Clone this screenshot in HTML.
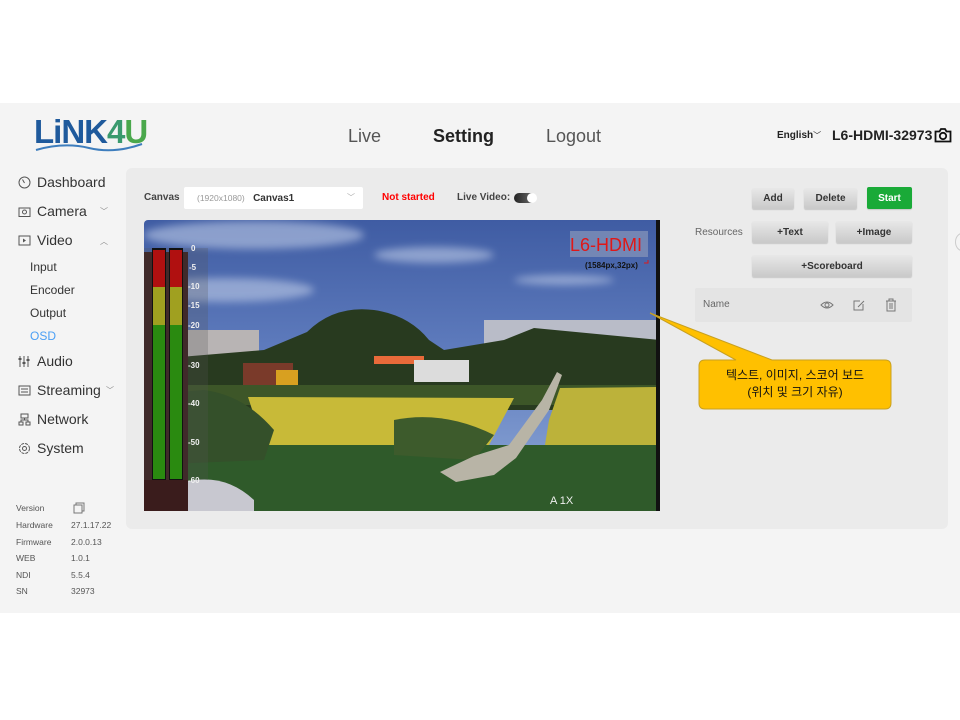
<!DOCTYPE html>
<html><head><meta charset="utf-8"><style>
*{margin:0;padding:0;box-sizing:border-box}
body{width:960px;height:720px;background:#fff;font-family:"Liberation Sans","Noto Sans CJK KR",sans-serif;position:relative;overflow:hidden;color:#333}
.abs{position:absolute}
#bg{left:0;top:103px;width:960px;height:510px;background:#f4f4f4}
.nav{font-size:18px;color:#555;top:126px}
.side{left:18px;font-size:14px;color:#333;display:flex;align-items:center}
.side svg{margin-right:6px}
.chev{position:absolute;font-size:8px;color:#888}
.sub{left:30px;font-size:12px;color:#333}
.ver{font-size:8.5px;color:#555}
#panel{left:126px;top:168px;width:822px;height:361px;background:#ebebeb;border-radius:6px}
.btn{background:linear-gradient(#e8e8e8,#c9c9c9);border-radius:2px;font-size:10px;font-weight:bold;color:#333;display:flex;align-items:center;justify-content:center;box-shadow:0 1px 1px rgba(0,0,0,.15)}
</style></head><body>
<div id="bg" class="abs"></div>
<!-- logo -->
<div class="abs" style="left:34px;top:112px;font-size:33px;font-weight:bold;letter-spacing:-1px;line-height:40px">
<span style="color:#1f5a9c">LiNK</span><span style="color:#3a9a6e">4</span><span style="color:#4aa84c">U</span></div>
<svg class="abs" style="left:34px;top:140px" width="110" height="14"><path d="M2 10 Q30 2 55 8 T108 4" stroke="#3d7dbd" stroke-width="2" fill="none"/></svg>
<div class="abs nav" style="left:348px">Live</div>
<div class="abs nav" style="left:433px;color:#222;font-weight:bold">Setting</div>
<div class="abs nav" style="left:546px">Logout</div>
<div class="abs" style="left:777px;top:130px;font-size:10px;font-weight:bold;color:#222">English<span style="font-weight:normal;font-size:8px">﹀</span></div>
<div class="abs" style="left:832px;top:127px;font-size:14px;font-weight:bold;color:#222">L6-HDMI-32973</div>
<svg class="abs" style="left:934px;top:127px" width="18" height="16" viewBox="0 0 18 16"><path d="M1.5 4.5h4l1.5-2.5h4l1.5 2.5h4v10h-15z" fill="none" stroke="#111" stroke-width="1.8"/><circle cx="9" cy="9" r="3.2" fill="none" stroke="#111" stroke-width="1.8"/></svg>

<!-- sidebar -->
<div class="abs side" style="top:174px"><svg width="13" height="13" viewBox="0 0 13 13"><circle cx="6.5" cy="6.5" r="5.5" fill="none" stroke="#555"/><path d="M6.5 7 L4.5 3.5" stroke="#555"/></svg>Dashboard</div>
<div class="abs side" style="top:203px"><svg width="13" height="13" viewBox="0 0 13 13"><rect x="1" y="3" width="11" height="8.5" fill="none" stroke="#555"/><circle cx="6.5" cy="7" r="2" fill="none" stroke="#555"/></svg>Camera</div>
<div class="chev" style="left:100px;top:206px">﹀</div>
<div class="abs side" style="top:232px"><svg width="13" height="13" viewBox="0 0 13 13"><rect x="1" y="2" width="11" height="9" fill="none" stroke="#555"/><path d="M5 4.5v4l3-2z" fill="#555"/></svg>Video</div>
<div class="chev" style="left:100px;top:236px">︿</div>
<div class="abs sub" style="top:260px">Input</div>
<div class="abs sub" style="top:283px">Encoder</div>
<div class="abs sub" style="top:306px">Output</div>
<div class="abs sub" style="top:329px;color:#4a9ff5">OSD</div>
<div class="abs side" style="top:353px"><svg width="13" height="13" viewBox="0 0 13 13"><path d="M2 1v11M6 1v11M10 1v11" stroke="#555"/><rect x="0.5" y="3" width="3" height="2" fill="#555"/><rect x="4.5" y="7" width="3" height="2" fill="#555"/><rect x="8.5" y="4" width="3" height="2" fill="#555"/></svg>Audio</div>
<div class="abs side" style="top:382px"><svg width="13" height="13" viewBox="0 0 13 13"><rect x="1" y="2" width="11" height="9" fill="none" stroke="#555"/><path d="M3 5h7M3 8h7" stroke="#555"/></svg>Streaming</div>
<div class="chev" style="left:106px;top:385px">﹀</div>
<div class="abs side" style="top:411px"><svg width="13" height="13" viewBox="0 0 13 13"><rect x="3" y="1" width="7" height="4" fill="none" stroke="#555"/><rect x="1" y="9" width="4" height="3" fill="none" stroke="#555"/><rect x="8" y="9" width="4" height="3" fill="none" stroke="#555"/><path d="M6.5 5v2M3 9V7h7v2" stroke="#555" fill="none"/></svg>Network</div>
<div class="abs side" style="top:440px"><svg width="13" height="13" viewBox="0 0 13 13"><circle cx="6.5" cy="6.5" r="5" fill="none" stroke="#555" stroke-dasharray="3 1"/><circle cx="6.5" cy="6.5" r="2" fill="none" stroke="#555"/></svg>System</div>
<div class="abs ver" style="left:16px;top:503px">Version</div>
<svg class="abs" style="left:73px;top:502px" width="13" height="12"><rect x="3" y="1" width="8" height="8" fill="none" stroke="#777"/><rect x="1" y="3" width="8" height="8" fill="#f4f4f4" stroke="#777"/></svg>
<div class="abs ver" style="left:16px;top:520px">Hardware</div><div class="abs ver" style="left:71px;top:520px">27.1.17.22</div>
<div class="abs ver" style="left:16px;top:537px">Firmware</div><div class="abs ver" style="left:71px;top:537px">2.0.0.13</div>
<div class="abs ver" style="left:16px;top:553px">WEB</div><div class="abs ver" style="left:71px;top:553px">1.0.1</div>
<div class="abs ver" style="left:16px;top:570px">NDI</div><div class="abs ver" style="left:71px;top:570px">5.5.4</div>
<div class="abs ver" style="left:16px;top:586px">SN</div><div class="abs ver" style="left:71px;top:586px">32973</div>

<div id="panel" class="abs"></div>
<div class="abs" style="left:144px;top:192px;font-size:10px;font-weight:bold;color:#444">Canvas</div>
<div class="abs" style="left:184px;top:187px;width:179px;height:22px;background:#fff;border-radius:2px;font-size:10px;line-height:22px;padding-left:13px">
<span style="color:#999;font-size:8.5px">(1920x1080)</span>&nbsp;&nbsp;&nbsp;<b style="color:#333">Canvas1</b><span style="position:absolute;right:8px;color:#aaa;font-size:8px">﹀</span></div>
<div class="abs" style="left:382px;top:192px;font-size:10px;font-weight:bold;color:#f00">Not started</div>
<div class="abs" style="left:457px;top:192px;font-size:10px;font-weight:bold;color:#444">Live Video:</div>
<div class="abs" style="left:514px;top:193px;width:22px;height:10px;border-radius:5px;background:linear-gradient(90deg,#222,#777)"></div>
<div class="abs" style="left:527px;top:193px;width:10px;height:10px;border-radius:5px;background:#fff"></div>

<div class="abs btn" style="left:752px;top:188px;width:42px;height:21px">Add</div>
<div class="abs btn" style="left:804px;top:188px;width:53px;height:21px">Delete</div>
<div class="abs btn" style="left:867px;top:187px;width:45px;height:22px;background:#1aaa38;color:#fff">Start</div>
<div class="abs" style="left:695px;top:227px;font-size:10px;color:#666">Resources</div>
<div class="abs btn" style="left:752px;top:221px;width:76px;height:22px">+Text</div>
<div class="abs btn" style="left:836px;top:221px;width:76px;height:22px">+Image</div>
<div class="abs btn" style="left:752px;top:255px;width:160px;height:22px">+Scoreboard</div>
<div class="abs" style="left:695px;top:288px;width:217px;height:34px;background:#e4e4e4;border-radius:2px"></div>
<div class="abs" style="left:703px;top:299px;font-size:10px;color:#666">Name</div>
<svg class="abs" style="left:820px;top:298px" width="82" height="14"><path d="M1 7 Q7 1 13 7 Q7 13 1 7z" fill="none" stroke="#777"/><circle cx="7" cy="7" r="2" fill="none" stroke="#777"/><path d="M40 3h-6v9h9v-6M38 9l6-6" fill="none" stroke="#777"/><path d="M66 3h10M69 3V1h4v2M67 3v10h8V3M70 5v6M72 5v6" fill="none" stroke="#777"/></svg>
<div class="abs" style="left:955px;top:233px;width:14px;height:18px;border:1.5px solid #ccc;border-radius:50%"></div>

<!-- video -->
<svg class="abs" style="left:144px;top:220px" width="516" height="291" viewBox="0 0 516 291">
<defs><linearGradient id="sky" x1="0" y1="0" x2="0" y2="1"><stop offset="0" stop-color="#3f5ca3"/><stop offset=".5" stop-color="#627fc0"/><stop offset="1" stop-color="#92acd8"/></linearGradient>
<filter id="bl"><feGaussianBlur stdDeviation="4"/></filter></defs>
<rect width="516" height="291" rx="4" fill="url(#sky)"/>
<g filter="url(#bl)" opacity=".55" fill="#c8d4ec"><ellipse cx="110" cy="15" rx="110" ry="14"/><ellipse cx="290" cy="35" rx="60" ry="8"/><ellipse cx="80" cy="70" rx="90" ry="12"/><ellipse cx="420" cy="60" rx="50" ry="5"/></g>
<rect x="40" y="110" width="75" height="30" fill="#b8b4b4"/>
<rect x="340" y="100" width="176" height="25" fill="#b9bcc8"/>
<path d="M120 130 L163 112 Q190 85 230 90 Q265 95 285 120 L300 130 L360 120 L390 108 L516 120 L516 190 L0 190 L0 140z" fill="#283a1f"/>
<rect x="99" y="143" width="50" height="34" fill="#7a3a2a"/><rect x="132" y="150" width="22" height="18" fill="#d8a020"/>
<rect x="230" y="136" width="50" height="8" fill="#e86a3a"/><rect x="270" y="140" width="55" height="22" fill="#dcdcdc"/>
<rect x="0" y="165" width="516" height="20" fill="#3d5628"/>
<path d="M104 177 L370 178 L345 225 L120 226z" fill="#c8ba38"/>
<path d="M416 168 L512 167 L512 262 L395 262 L405 200z" fill="#bcb23a"/>
<path d="M0 225 L516 225 L516 291 L0 291z" fill="#2f5a2a"/>
<path d="M0 175 L60 170 Q100 175 130 210 L120 240 L0 245z" fill="#34502a"/>
<path d="M250 200 Q300 190 350 215 L330 240 L250 235z" fill="#3d5b2c"/>
<path d="M413 152 L398 180 L365 225 L330 236 L296 252 L312 262 L350 255 L372 238 L405 190 L418 155z" fill="#b8b4a6"/>
<path d="M40 262 Q80 252 110 280 L110 291 L40 291z" fill="#c8c8d0"/>
<!-- meter -->
<rect x="0" y="32" width="44" height="259" fill="#3a1c1c"/>
<rect x="0" y="28" width="64" height="232" fill="#555" opacity=".25"/>
<rect x="8" y="28" width="14" height="232" fill="#111"/><rect x="25" y="28" width="14" height="232" fill="#111"/>
<rect x="9" y="30" width="12" height="37" fill="#b01010"/><rect x="26" y="30" width="12" height="37" fill="#b01010"/>
<rect x="9" y="67" width="12" height="38" fill="#a0a020"/><rect x="26" y="67" width="12" height="38" fill="#a0a020"/>
<rect x="9" y="105" width="12" height="154" fill="#2a8a10"/><rect x="26" y="105" width="12" height="154" fill="#2a8a10"/>
<g font-family="Liberation Sans" font-size="8" font-weight="bold" fill="#f0f0f0">
<text x="47" y="31">0</text><text x="45" y="50">-5</text><text x="44" y="69">-10</text><text x="44" y="88">-15</text><text x="44" y="108">-20</text><text x="44" y="148">-30</text><text x="44" y="186">-40</text><text x="44" y="225">-50</text><text x="44" y="263">-60</text>
<text x="406" y="284" font-size="11" font-weight="normal">A  1X</text></g>
<rect x="426" y="11" width="78" height="26" fill="#8090b8" opacity=".8"/>
<text x="426" y="31" font-family="Liberation Sans" font-size="18" fill="#e01818">L6-HDMI</text>
<text x="441" y="48" font-family="Liberation Sans" font-size="8" font-weight="bold" fill="#111">(1584px,32px)</text>
<path d="M504 40v3h-4" stroke="#e01818" fill="none"/>
<rect x="512" y="0" width="4" height="291" fill="#111"/>
</svg>
<!-- callout -->
<svg class="abs" style="left:640px;top:305px" width="260" height="110">
<path d="M10 8 L132 55 L245 55 Q251 55 251 61 L251 98 Q251 104 245 104 L65 104 Q59 104 59 98 L59 61 Q59 55 65 55 L96 55 Z" fill="#ffc000" stroke="#c8a020" stroke-width="1"/>
</svg>
<div class="abs" style="left:699px;top:367px;width:192px;text-align:center;font-size:12px;line-height:17px;color:#111">텍스트, 이미지, 스코어 보드<br>(위치 및 크기 자유)</div>
</body></html>
